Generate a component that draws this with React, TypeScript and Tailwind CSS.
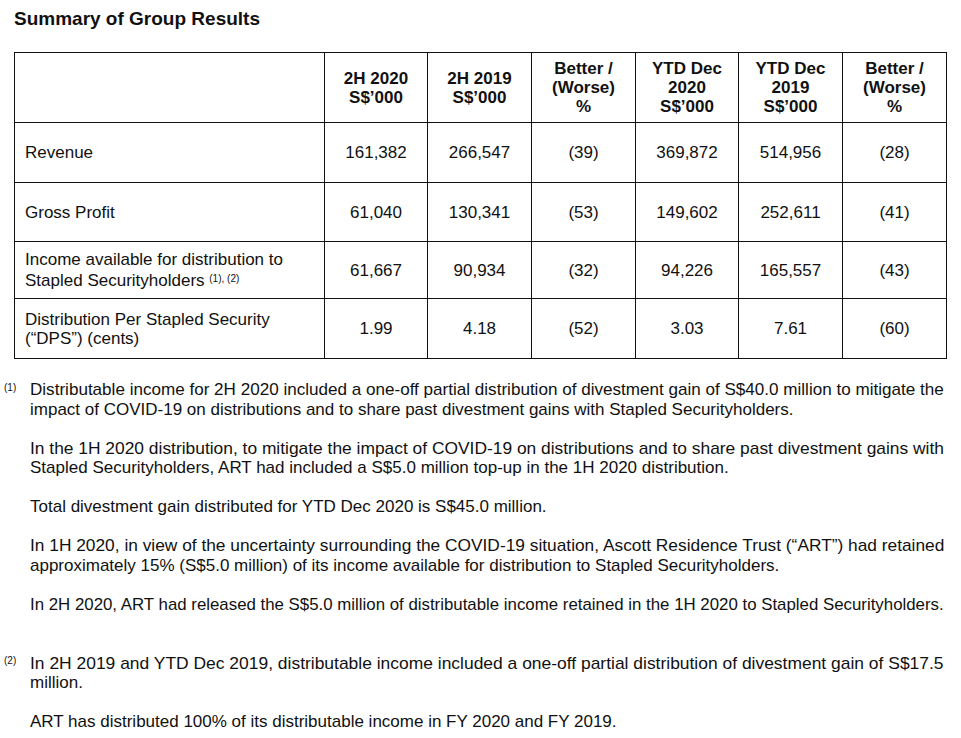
import React, { useLayoutEffect, useRef, useState } from "react";

function Fit({ children, w }: { children: React.ReactNode; w?: number }) {
  const ref = useRef<HTMLSpanElement>(null);
  const [s, setS] = useState(1);
  useLayoutEffect(() => {
    if (!w) return;
    const m = () => {
      if (ref.current) {
        const nw = ref.current.offsetWidth;
        if (nw) setS(w / nw);
      }
    };
    m();
    if (document.fonts) document.fonts.ready.then(m);
  }, [w]);
  return (
    <div className="h-[19.5px] leading-[19.5px] whitespace-nowrap">
      <span ref={ref} className="inline-block origin-left" style={w ? { transform: `scaleX(${s})` } : undefined}>
        {children}
      </span>
    </div>
  );
}

const header = [
  ["2H 2020", "S$’000"],
  ["2H 2019", "S$’000"],
  ["Better /", "(Worse)", "%"],
  ["YTD Dec", "2020", "S$’000"],
  ["YTD Dec", "2019", "S$’000"],
  ["Better /", "(Worse)", "%"],
];

const rows: { label: React.ReactNode; h: string; vals: string[] }[] = [
  { label: "Revenue", h: "h-[60px]", vals: ["161,382", "266,547", "(39)", "369,872", "514,956", "(28)"] },
  { label: "Gross Profit", h: "h-[59px]", vals: ["61,040", "130,341", "(53)", "149,602", "252,611", "(41)"] },
  {
    label: (
      <>
        <div>Income available for distribution to</div>
        <div>
          Stapled Securityholders <span className="text-[10px] align-[4px]">(1), (2)</span>
        </div>
      </>
    ),
    h: "h-[57px]",
    vals: ["61,667", "90,934", "(32)", "94,226", "165,557", "(43)"],
  },
  {
    label: (
      <>
        <div>Distribution Per Stapled Security</div>
        <div>(“DPS”) (cents)</div>
      </>
    ),
    h: "h-[60px]",
    vals: ["1.99", "4.18", "(52)", "3.03", "7.61", "(60)"],
  },
];

export default function App() {
  const cell = "border-r border-b border-[#111] flex flex-col items-center justify-center text-center";
  return (
    <div className="w-[961px] h-[738px] bg-white text-[#111] font-['Liberation_Sans',Arial,sans-serif] overflow-hidden">
      <div className="pl-[14px] pt-[8px] text-[19px] font-bold leading-[22px]">Summary of Group Results</div>
      <div className="ml-[14px] mt-[22px] w-[933px] border-l border-t border-[#111] grid grid-cols-[310px_103px_104px_104px_103px_104px_104px] text-[17px] leading-[19px]">
        <div className="h-[70px] border-r border-b border-[#111]" />
        {header.map((h, i) => (
          <div key={i} className={`h-[70px] font-bold ${cell}`}>
            {h.map((t, j) => (
              <div key={j}>{t}</div>
            ))}
          </div>
        ))}
        {rows.map((r, i) => (
          <React.Fragment key={i}>
            <div className={`${r.h} border-r border-b border-[#111] flex flex-col justify-center pl-[10px]`}>{r.label}</div>
            {r.vals.map((v, j) => (
              <div key={j} className={`${r.h} ${cell}`}>
                {v}
              </div>
            ))}
          </React.Fragment>
        ))}
      </div>

      <div className="mt-[21px] text-[17px]">
        <div className="flex pl-[4px]">
          <div className="w-[26px] text-[10px] leading-none pt-[3px]">(1)</div>
          <div className="flex flex-col gap-[19.5px]">
            <div>
              <Fit w={914}>Distributable income for 2H 2020 included a one-off partial distribution of divestment gain of S$40.0 million to mitigate the</Fit>
              <Fit>impact of COVID-19 on distributions and to share past divestment gains with Stapled Securityholders.</Fit>
            </div>
            <div>
              <Fit w={914}>In the 1H 2020 distribution, to mitigate the impact of COVID-19 on distributions and to share past divestment gains with</Fit>
              <Fit>Stapled Securityholders, ART had included a S$5.0 million top-up in the 1H 2020 distribution.</Fit>
            </div>
            <div>
              <Fit>Total divestment gain distributed for YTD Dec 2020 is S$45.0 million.</Fit>
            </div>
            <div>
              <Fit w={914}>In 1H 2020, in view of the uncertainty surrounding the COVID-19 situation, Ascott Residence Trust (“ART”) had retained</Fit>
              <Fit>approximately 15% (S$5.0 million) of its income available for distribution to Stapled Securityholders.</Fit>
            </div>
            <div>
              <Fit w={914}>In 2H 2020, ART had released the S$5.0 million of distributable income retained in the 1H 2020 to Stapled Securityholders.</Fit>
            </div>
          </div>
        </div>
        <div className="flex pl-[4px] mt-[39.5px]">
          <div className="w-[26px] text-[10px] leading-none pt-[2px]">(2)</div>
          <div className="flex flex-col gap-[19px]">
            <div>
              <Fit w={914}>In 2H 2019 and YTD Dec 2019, distributable income included a one-off partial distribution of divestment gain of S$17.5</Fit>
              <Fit>million.</Fit>
            </div>
            <div>
              <Fit>ART has distributed 100% of its distributable income in FY 2020 and FY 2019.</Fit>
            </div>
          </div>
        </div>
      </div>
    </div>
  );
}
